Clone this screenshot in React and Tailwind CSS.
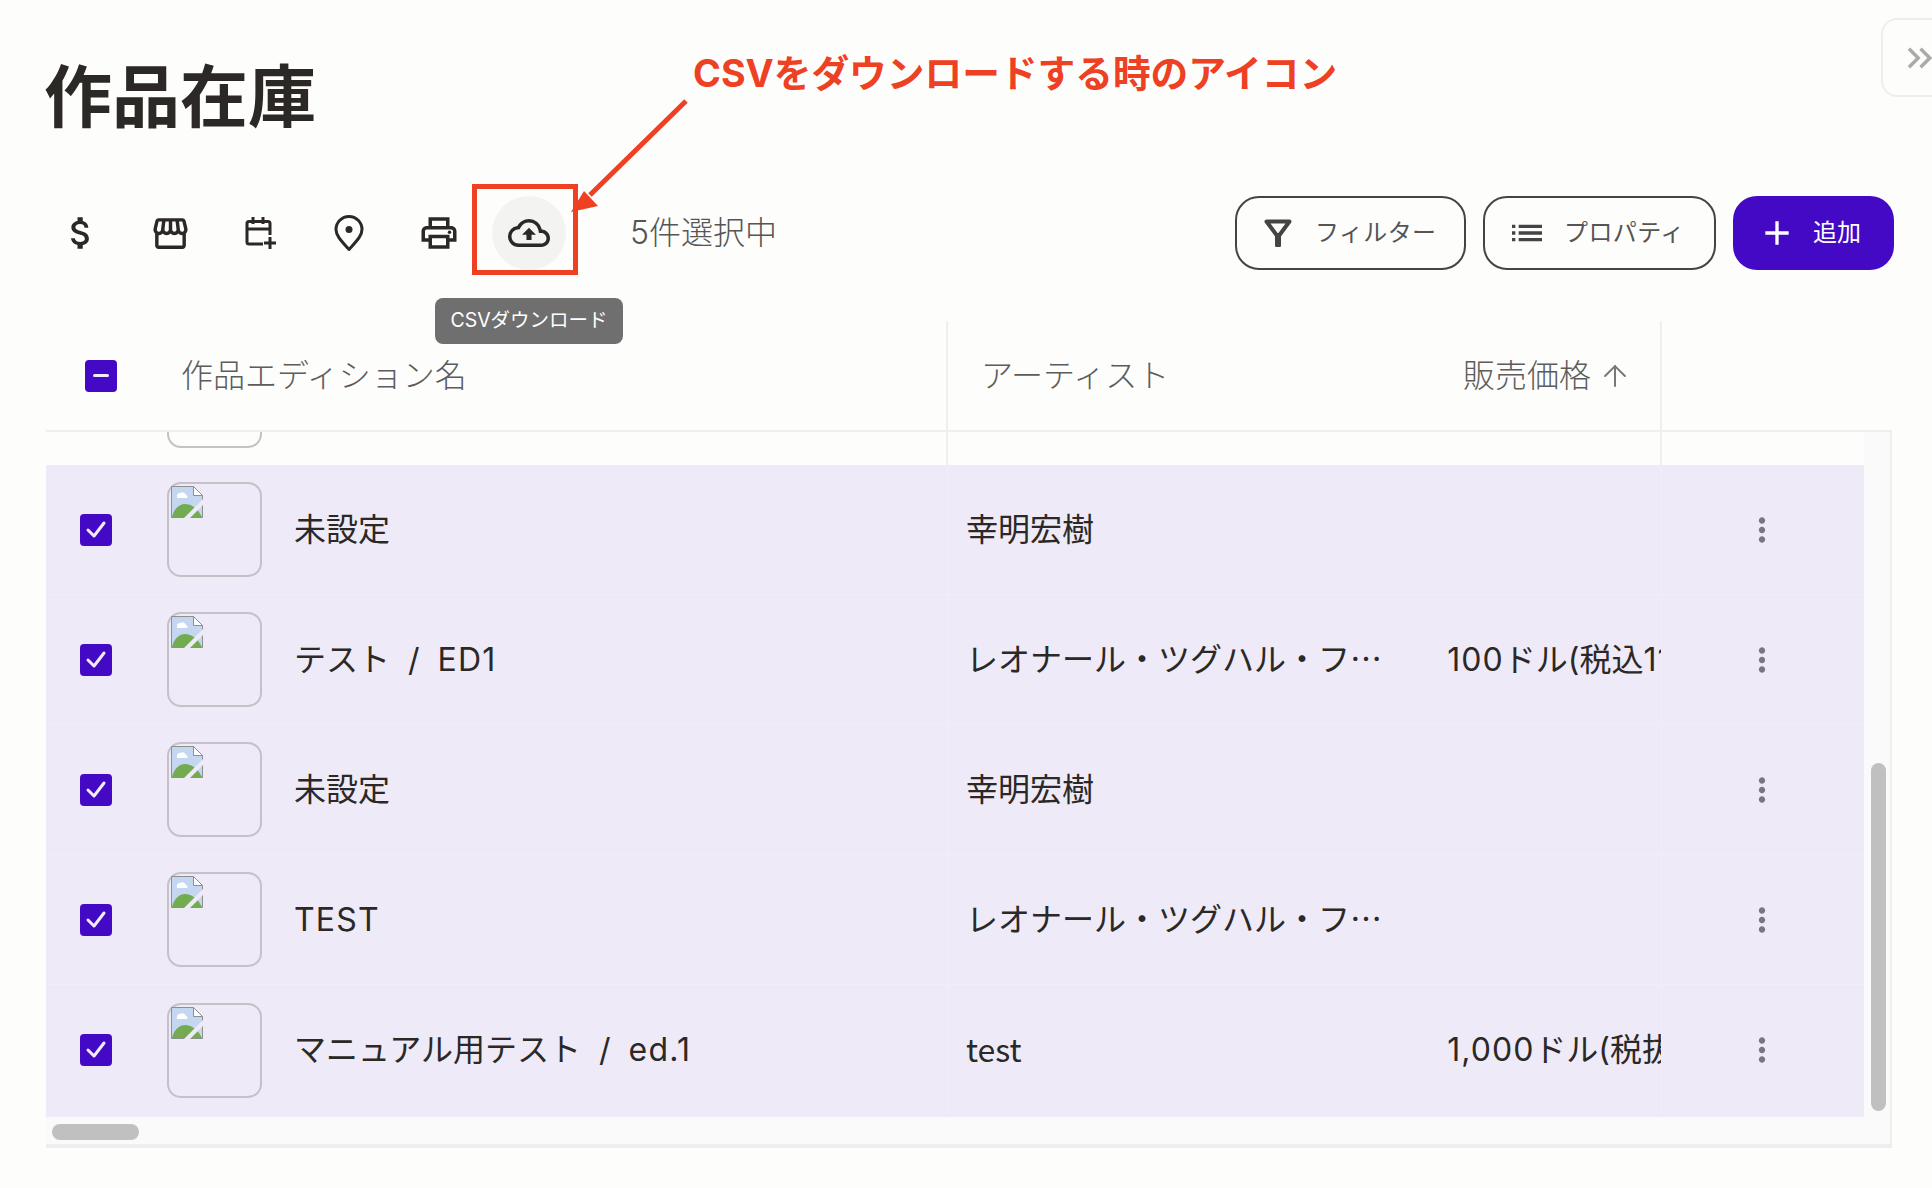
import React from 'react';
import { ArrowUp } from 'lucide-react';
import {
  MdOutlineAttachMoney,
  MdOutlineStorefront,
  MdOutlinePrint,
  MdOutlineCloudUpload,
  MdList,
  MdAdd,
  MdMoreVert,
  MdKeyboardDoubleArrowRight,
} from 'react-icons/md';

const rows = [
  { name: '未設定', artist: '幸明宏樹', price: '' },
  { name: 'テスト  /  ED1', artist: 'レオナール・ツグハル・フジタ', price: '100ドル(税込110ドル)' },
  { name: '未設定', artist: '幸明宏樹', price: '' },
  { name: 'TEST', artist: 'レオナール・ツグハル・フジタ', price: '' },
  { name: 'マニュアル用テスト  /  ed.1', artist: 'test', price: '1,000ドル(税抜)' },
];

// latin runs sit a little wider than the kana around them
function Spaced({ text, spacing = 'tracking-[1.2px]' }) {
  return text.split(/([A-Za-z0-9.,]+)/).map((part, i) =>
    i % 2 ? <span key={i} className={spacing}>{part}</span> : part
  );
}

function CalendarPlus() {
  return (
    <svg width="32" height="34" viewBox="0 0 32 34" fill="none" stroke="#2b2825" strokeWidth="3" className="ml-[3px]">
      <path d="M25 19V7.500a2 2 0 0 0-2-2H4a2 2 0 0 0-2 2V26a2 2 0 0 0 2 2h14" />
      <path d="M2 13h23M8 1v7M18 1v7" />
      <path d="M25 21v12M19 27h12" />
    </svg>
  );
}

function Pin() {
  return (
    <svg width="30" height="37" viewBox="0 0 30 37" fill="none" className="-ml-px">
      <path d="M15 34.500C7 25.500 2 20.500 2 14.500a13 13 0 0 1 26 0c0 6-5 11-13 20z" stroke="#2b2825" strokeWidth="3" strokeLinejoin="round" />
      <circle cx="15" cy="14.500" r="3.500" fill="#2b2825" />
    </svg>
  );
}

function Funnel() {
  return (
    <svg width="28" height="28" viewBox="0 0 28 28" fill="none" stroke="#444" strokeLinejoin="round">
      <path d="M2.500 2.500h23L14 18z" strokeWidth="4" />
      <path d="M14 17v9" strokeWidth="6" strokeLinecap="round" />
    </svg>
  );
}

function BrokenImage() {
  return (
    <svg width="32" height="32" viewBox="0 0 32 32" className="block">
      <path d="M.5.5h22l9 9v22H.5z" fill="#c5d6f0" stroke="#8f8f8f" />
      <path d="M22.500.5v9h9z" fill="#fff" stroke="#8f8f8f" />
      <path d="M6 11a3 3 0 0 1 3-4 4 4 0 0 1 6 2 2 2 0 0 1 1 3H6z" fill="#fff" />
      <path d="M1 31c2-9 8-13 13-13 6 0 11 4 14 8l3 5z" fill="#72ab50" />
      <path d="M13 32l19-19v6L19 32z" fill="#eeeaf8" />
    </svg>
  );
}

function Thumb({ className = '' }) {
  return (
    <div className={`w-[95px] h-[95px] shrink-0 border-2 border-[#c4c2c6] rounded-[14px] p-[2px] ${className}`}>
      <BrokenImage />
    </div>
  );
}

function Checkbox({ minus }) {
  return (
    <div className="w-8 h-8 rounded bg-[#4409c4] flex items-center justify-center">
      {minus ? (
        <div className="w-4 h-[3px] bg-[#f1ecfb] rounded-sm" />
      ) : (
        <svg width="24" height="20" viewBox="0 0 24 20" fill="none" stroke="#f1ecfb" strokeWidth="3" strokeLinecap="round" strokeLinejoin="round">
          <path d="M4 10l6 6L20 3" />
        </svg>
      )}
    </div>
  );
}

function ToolButton({ children, active }) {
  return (
    <button className={`w-[74px] h-[74px] rounded-full flex items-center justify-center text-[#2b2825] ${active ? 'bg-[#f3f3f2]' : ''}`}>
      {children}
    </button>
  );
}

export default function App() {
  return (
    <div className="relative w-full h-[1188px] overflow-hidden bg-[#fdfdfc] text-[#2b2825] font-['Inter','Noto_Sans_CJK_JP',sans-serif]">
      {/* Title */}
      <h1 className="pl-[44px] pt-[56px] text-[68px] leading-[82px] font-bold">作品在庫</h1>

      {/* Toolbar */}
      <div className="mt-[58px] ml-[43px] mr-[38px] h-[74px] flex items-center">
        <div className="flex gap-[15.8px]">
          <ToolButton><MdOutlineAttachMoney size={42} className="ml-[2px]" /></ToolButton>
          <ToolButton><MdOutlineStorefront size={41} className="ml-[2px]" /></ToolButton>
          <ToolButton><CalendarPlus /></ToolButton>
          <ToolButton><Pin /></ToolButton>
          <ToolButton><MdOutlinePrint size={42} /></ToolButton>
          <ToolButton active><MdOutlineCloudUpload size={42} /></ToolButton>
        </div>
        <span className="ml-[64px] text-[32px] font-light text-[#555]">5件選択中</span>
        <div className="ml-auto flex gap-[17px]">
          <button className="w-[231px] h-[74px] border-2 border-[#444] rounded-3xl flex items-center pl-[27px] gap-[23px] text-[24px] tracking-[0.4px] text-[#555]">
            <Funnel />
            フィルター
          </button>
          <button className="w-[233px] h-[74px] border-2 border-[#444] rounded-3xl flex items-center pl-[22px] gap-[17px] text-[24px] tracking-[0.4px] text-[#555]">
            <MdList size={40} color="#444" />
            プロパティ
          </button>
          <button className="w-[161px] h-[74px] bg-[#4409c4] rounded-3xl flex items-center pl-[24px] gap-[16px] text-[24px] text-white">
            <MdAdd size={40} />
            追加
          </button>
        </div>
      </div>

      {/* Table */}
      <div className="mt-[51px] ml-[46px] w-[1846px] text-[32px]">
        {/* Header */}
        <div className="h-[111px] flex items-center border-b-2 border-[#efefec] font-light text-[#5c5c5c] whitespace-nowrap">
          <div className="w-[902px] h-full flex items-center pl-[39px] border-r-2 border-[#efefec]">
            <Checkbox minus />
            <span className="ml-[64px]">作品エディション名</span>
          </div>
          <div className="w-[714px] h-full flex items-center pl-[33px] border-r-2 border-[#efefec]">
            <span className="w-[482px] shrink-0">アーティスト</span>
            <span>販売価格</span>
            <ArrowUp size={34} strokeWidth={1.4} className="ml-[7px] shrink-0 text-[#777]" />
          </div>
        </div>

        {/* Body */}
        <div className="flex border-r-2 border-[#efefec]">
          <div className="w-[1818px] bg-[#eeeaf8] pb-[2px]">
            <div className="h-[33px] bg-[#fdfdfc] overflow-hidden flex">
              <div className="w-[902px] border-r-2 border-[#efefec] pl-[121px]">
                <Thumb className="-mt-[79px]" />
              </div>
              <div className="w-[714px] border-r-2 border-[#efefec]" />
            </div>
            {rows.map((row, i) => (
              <div key={i} className="h-[130px] flex items-center border-b border-[#f1eff6] last:border-b-0">
                <div className="w-[902px] h-full flex items-center border-r border-[#f1eff6]">
                  <div className="w-[121px] pl-[34px]"><Checkbox /></div>
                  <Thumb />
                  <span className="ml-[32px] whitespace-pre"><Spaced text={row.name} /></span>
                </div>
                <div className="w-[714px] h-full flex items-center border-r border-[#f1eff6]">
                  <div className="w-[500px] pl-[18px] pr-[64px] pb-[5px] truncate font-['Noto_Sans_CJK_JP',sans-serif]">{row.artist}</div>
                  <div className="w-[214px] whitespace-nowrap overflow-hidden"><Spaced text={row.price} spacing="tracking-[1px]" /></div>
                </div>
                <div className="flex-1 pl-[81px] text-[#787680]"><MdMoreVert size={38} /></div>
              </div>
            ))}
          </div>
          {/* Vertical scrollbar */}
          <div className="flex-1 bg-[#fafafa] pl-[7px] pt-[331px]">
            <div className="w-[15px] h-[348px] rounded-full bg-[#c0c0c0]" />
          </div>
        </div>

        {/* Horizontal scrollbar */}
        <div className="h-[31px] bg-[#fafafa] border-b-4 border-[#eeeeee] border-r-2 pl-[6px] pt-[7px]">
          <div className="w-[87px] h-4 rounded-full bg-[#c0c0c0]" />
        </div>
      </div>

      {/* Collapse handle */}
      <div className="absolute top-[18px] left-[1881px] w-[80px] h-[79px] border-2 border-[#eeeeec] rounded-l-2xl flex items-center pl-[16px] text-[#aaa]">
        <MdKeyboardDoubleArrowRight size={42} />
      </div>

      {/* Tooltip */}
      <div className="absolute top-[298px] left-[435px] w-[188px] h-[46px] rounded-lg bg-[#6f6f6f] text-white text-[19.5px] flex items-center justify-center">
        CSVダウンロード
      </div>

      {/* Annotation */}
      <div className="absolute top-[45px] left-[693px] text-[37.7px] font-bold text-[#ee4023] whitespace-nowrap">
        CSVをダウンロードする時のアイコン
      </div>
      <div className="absolute top-[184px] left-[472px] w-[106px] h-[91px] border-[5px] border-[#ee4023]" />
      <svg className="absolute top-0 left-0" width="720" height="240" fill="none">
        <path d="M686 101L590 195" stroke="#ee4023" strokeWidth="5" />
        <path d="M571 212L584 191L598 206z" fill="#ee4023" />
      </svg>
    </div>
  );
}
